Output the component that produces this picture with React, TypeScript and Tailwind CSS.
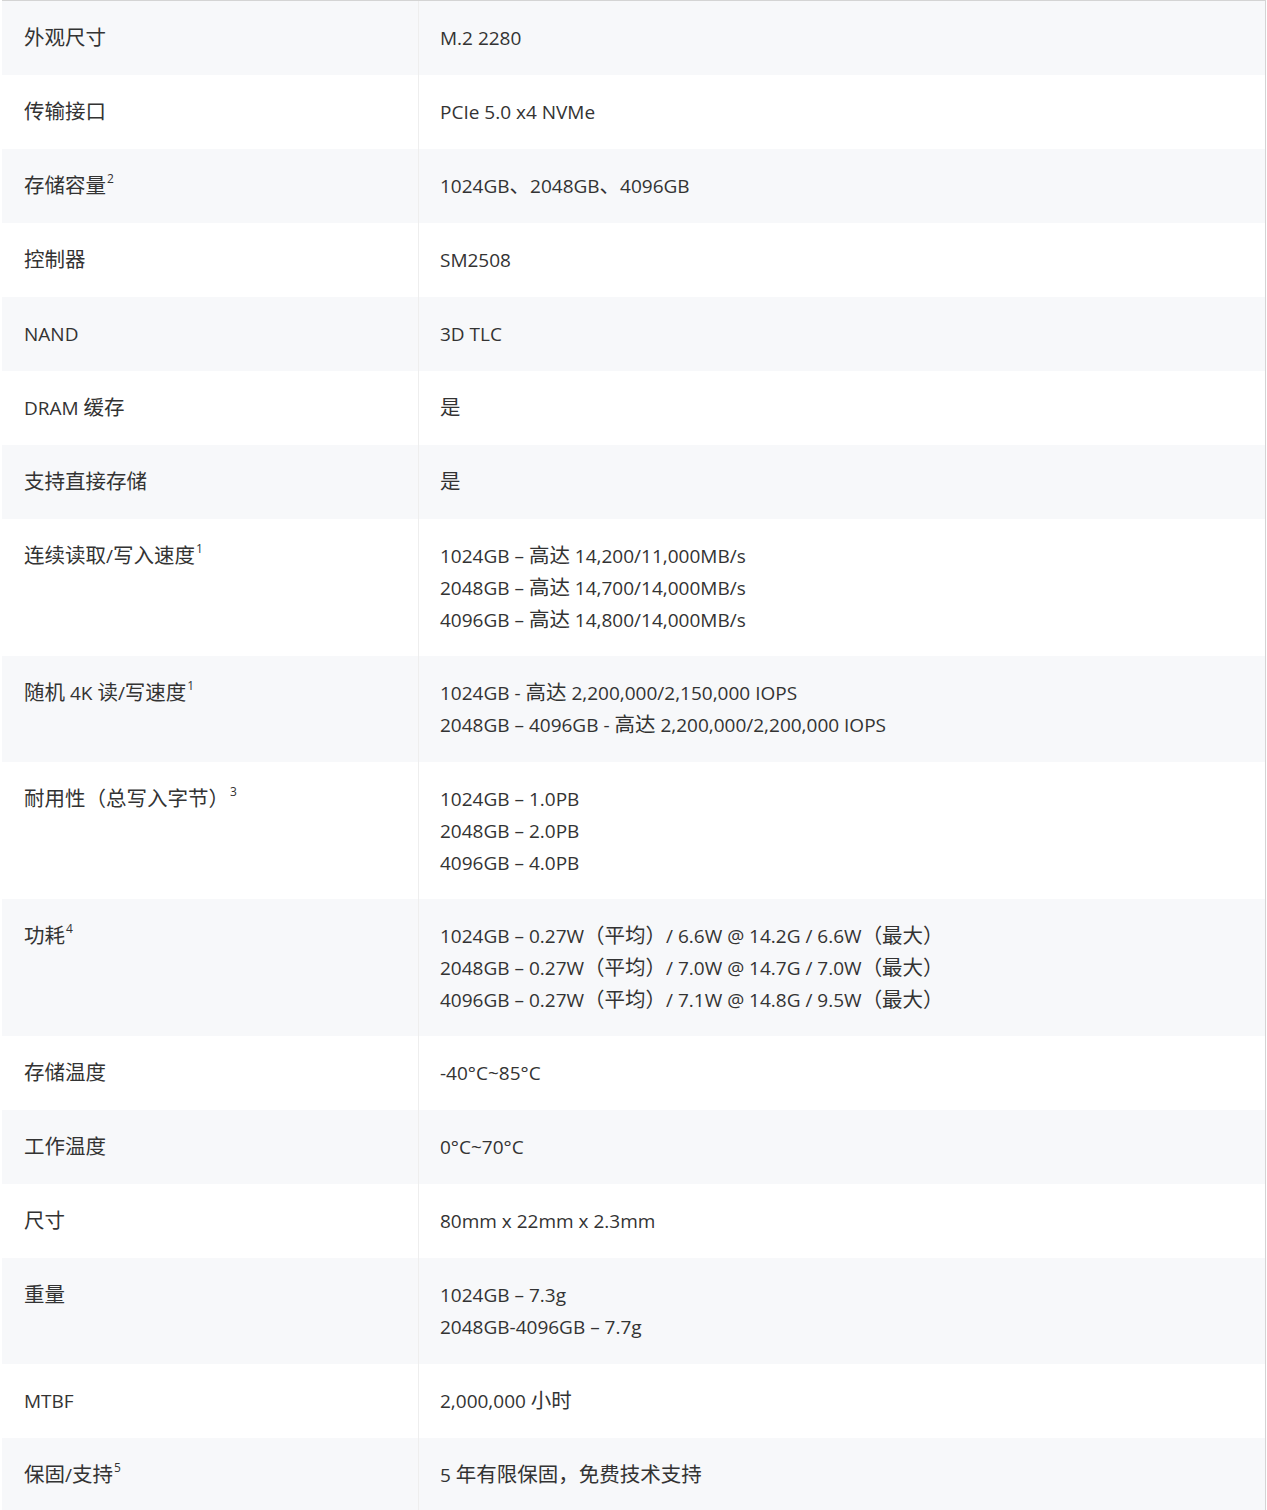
import React from 'react'

type Spec = { label: string; sup?: string; values: string[] }

const specs: Spec[] = [
  { label: '外观尺寸', values: ['M.2 2280'] },
  { label: '传输接口', values: ['PCIe 5.0 x4 NVMe'] },
  { label: '存储容量', sup: '2', values: ['1024GB、2048GB、4096GB'] },
  { label: '控制器', values: ['SM2508'] },
  { label: 'NAND', values: ['3D TLC'] },
  { label: 'DRAM 缓存', values: ['是'] },
  { label: '支持直接存储', values: ['是'] },
  {
    label: '连续读取/写入速度',
    sup: '1',
    values: [
      '1024GB – 高达 14,200/11,000MB/s',
      '2048GB – 高达 14,700/14,000MB/s',
      '4096GB – 高达 14,800/14,000MB/s',
    ],
  },
  {
    label: '随机 4K 读/写速度',
    sup: '1',
    values: [
      '1024GB - 高达 2,200,000/2,150,000 IOPS',
      '2048GB – 4096GB - 高达 2,200,000/2,200,000 IOPS',
    ],
  },
  {
    label: '耐用性（总写入字节）',
    sup: '3',
    values: ['1024GB – 1.0PB', '2048GB – 2.0PB', '4096GB – 4.0PB'],
  },
  {
    label: '功耗',
    sup: '4',
    values: [
      '1024GB – 0.27W（平均）/ 6.6W @ 14.2G / 6.6W（最大）',
      '2048GB – 0.27W（平均）/ 7.0W @ 14.7G / 7.0W（最大）',
      '4096GB – 0.27W（平均）/ 7.1W @ 14.8G / 9.5W（最大）',
    ],
  },
  { label: '存储温度', values: ['-40°C~85°C'] },
  { label: '工作温度', values: ['0°C~70°C'] },
  { label: '尺寸', values: ['80mm x 22mm x 2.3mm'] },
  { label: '重量', values: ['1024GB – 7.3g', '2048GB-4096GB – 7.7g'] },
  { label: 'MTBF', values: ['2,000,000 小时'] },
  { label: '保固/支持', sup: '5', values: ['5 年有限保固，免费技术支持'] },
]

// 中文部分字号稍大，贴近原图的雅黑字宽
const Mixed = ({ text }: { text: string }) => {
  const parts = text.split(/([\u3000-\u303f\u4e00-\u9fff\uff00-\uffef]+)/)
  return (
    <>
      {parts.map((p, i) =>
        i % 2 === 1 ? (
          <span key={i} className="text-[20.5px] leading-none">
            {p}
          </span>
        ) : (
          <React.Fragment key={i}>{p}</React.Fragment>
        )
      )}
    </>
  )
}

export default function App() {
  return (
    <div
      className="w-[1267px] bg-white text-[#333333]"
      style={{ fontFamily: '"Open Sans", "Noto Sans CJK SC", sans-serif' }}
    >
      <div className="ml-[2px] mr-[1px] border-t border-r border-b border-[#d4d4d4]">
        {specs.map((s, i) => (
          <div
            key={i}
            className={`grid grid-cols-[417px_1fr] min-h-[74px] text-[19px] leading-[32px] ${
              i % 2 === 0 ? 'bg-[#f7f8fa]' : 'bg-white'
            }`}
          >
            <div className="py-[20px] pl-[22px] pr-4 border-r border-[#eeeeee]">
              <div className="h-[32px] pt-[1px]">
                <Mixed text={s.label} />
                {s.sup && (
                  <sup className="text-[12px] relative top-[-3px] ml-[1px] align-super leading-none">
                    {s.sup}
                  </sup>
                )}
              </div>
            </div>
            <div
              className={`pl-[21px] pr-4 ${
                s.values.length === 3 ? 'py-[20.5px]' : 'py-[21px]'
              }`}
            >
              {s.values.map((v, j) => (
                <div key={j} className="h-[32px]">
                  <Mixed text={v} />
                </div>
              ))}
            </div>
          </div>
        ))}
      </div>
    </div>
  )
}
